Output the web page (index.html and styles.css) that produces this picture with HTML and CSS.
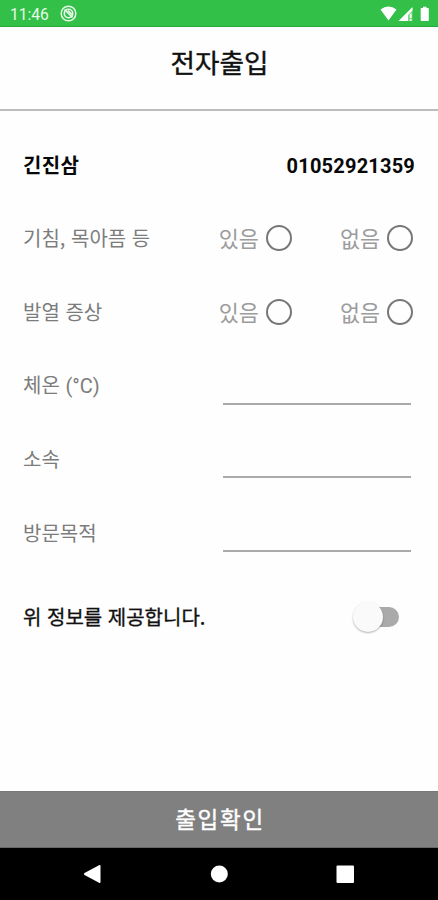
FILE: index.html
```html
<!DOCTYPE html>
<html lang="ko">
<head>
<meta charset="utf-8">
<title>전자출입</title>
<link rel="stylesheet" href="styles.css">
</head>
<body>
<div class="status">
  <span class="time">11:46</span>
  <svg class="notice" width="17" height="17" viewBox="0 0 17 17" fill="none" stroke="#e9f9eb"><circle cx="8.5" cy="8.5" r="7.3" stroke-width="1.5"/><circle cx="8.5" cy="8.5" r="4.2" stroke-width="1.6"/><path d="M4.5 4.5l8 8M8 5.5l4 4" stroke-width="1.6"/></svg>
  <svg class="signals" width="50" height="16" viewBox="0 0 50 16"><g fill="#fff"><path d="M.5 3.500Q8.500 -2.500 16.500 3.500L8.500 14.500Z"/><path d="M18.500 15L32.500 1V4.500L28 9V15Z"/><path d="M28 6L32.500 1.500V15H28Z" opacity=".35"/><path d="M29.800 8.500l1.700-1.500v5h-1.700ZM29.800 13.200h1.700V15h-1.700Z"/><path d="M41.500 2H43V.8h3.500V2H48q.8 0 .8.800V14.200q0 .8-.8.800H41.500q-.8 0-.8-.800V2.800q0-.8.800-.8Z"/></g></svg>
</div>
<header class="title">전자출입</header>
<main class="form">
  <div class="row person"><span class="name">긴진삼</span><span class="phone">01052921359</span></div>
  <div class="row"><span>기침, 목아픔 등</span><div class="choices"><label class="choice">있음<i class="radio"></i></label><label class="choice">없음<i class="radio"></i></label></div></div>
  <div class="row"><span>발열 증상</span><div class="choices"><label class="choice">있음<i class="radio"></i></label><label class="choice">없음<i class="radio"></i></label></div></div>
  <div class="row"><span>체온 <span class="unit">(°C)</span></span><div class="field"></div></div>
  <div class="row"><span>소속</span><div class="field"></div></div>
  <div class="row"><span>방문목적</span><div class="field"></div></div>
  <div class="row agree"><span>위 정보를 제공합니다.</span><div class="switch"><div class="thumb"></div></div></div>
</main>
<div class="confirm">출입확인</div>
<nav class="nav">
  <svg width="438" height="52" viewBox="0 0 438 52" fill="#fff"><path d="M84.500 25L99 17.200Q100.500 16.500 100.500 18V34Q100.500 35.500 99 34.800L84.500 27Q83 26 84.500 25Z"/><circle cx="219.300" cy="26" r="8.500"/><rect x="336.500" y="17.500" width="17.500" height="17.500" rx="1"/></svg>
</nav>
</body>
</html>
```
FILE: styles.css
```css
* { box-sizing: border-box; }
body {
  margin: 0;
  width: 438px;
  height: 900px;
  display: flex;
  flex-direction: column;
  background: #fefefe;
  color: #7c7c7c;
  font: 20px/30px "Noto Sans CJK KR", sans-serif;
  overflow: hidden;
}
svg { display: block; }
.status {
  height: 27px;
  flex: none;
  display: flex;
  align-items: center;
  padding: 1px 8px 0 10px;
  background: #32c048;
  border-bottom: 1px solid #22ab39;
}
.time {
  width: 50px;
  padding-top: 2px;
  color: #e9f9eb;
  font: 15.600px/20px Roboto, sans-serif;
}
.signals { margin-left: auto; }
.title {
  height: 84px;
  flex: none;
  padding: 15px 0 0 1px;
  border-bottom: 2px solid #bdbdbd;
  color: #111;
  text-align: center;
  font-size: 26.600px;
  line-height: 40px;
  -webkit-text-stroke: .4px #111;
}
.form {
  flex: 1;
  padding: 17px 24px 0 23px;
}
.row {
  height: 73.600px;
  display: flex;
  align-items: center;
  justify-content: space-between;
}
.person {
  color: #080808;
  font-weight: 700;
}
.name { letter-spacing: .3px; }
.phone {
  padding-top: 2px;
  margin-right: -1px;
  font: 700 20px/30px Roboto, sans-serif;
  letter-spacing: .2px;
}
.unit { font-family: Roboto, sans-serif; }
.choices {
  display: flex;
  gap: 48px;
  margin-right: 1px;
}
.choice {
  display: flex;
  align-items: center;
  gap: 7px;
  color: #9c9c9c;
  font-size: 21.800px;
}
.radio {
  width: 26px;
  height: 26px;
  border: 2px solid #777;
  border-radius: 50%;
}
.field {
  width: 188px;
  height: 38px;
  margin-right: 3px;
  border-bottom: 2px solid #aaa;
}
.agree {
  height: 94px;
  color: #111;
  -webkit-text-stroke: .35px #111;
}
.switch {
  width: 47px;
  height: 32px;
  margin-right: 14px;
  display: flex;
  align-items: center;
}
.switch::after {
  content: "";
  width: 32px;
  height: 20px;
  margin-left: -16px;
  border-radius: 10px;
  background: #aaa;
}
.thumb {
  width: 30px;
  height: 30px;
  flex: none;
  position: relative;
  z-index: 1;
  border-radius: 50%;
  background: #fafafa;
  box-shadow: 0 1px 2px rgba(0, 0, 0, .3);
}
.confirm {
  height: 57px;
  flex: none;
  padding-left: 2px;
  border-top: 1px solid #777;
  border-bottom: 1px solid #666;
  background: #808080;
  color: #fff;
  text-align: center;
  font-size: 22.500px;
  line-height: 53px;
  letter-spacing: 1.700px;
  -webkit-text-stroke: .4px #fff;
}
.nav {
  height: 52px;
  flex: none;
  background: #000;
}
```
